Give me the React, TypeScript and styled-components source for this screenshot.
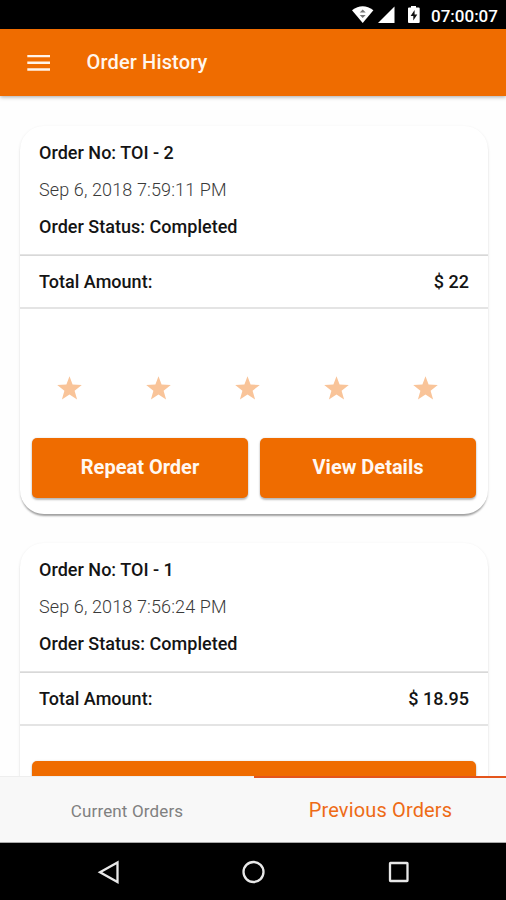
import React from "react";
import styled, { createGlobalStyle } from "styled-components";

const ORANGE = "#ef6c00";

const GlobalStyle = createGlobalStyle`
  *, *::before, *::after { box-sizing: border-box; }
  html, body { margin: 0; padding: 0; overflow: hidden; }
  body { font-family: Roboto, "Liberation Sans", sans-serif; background: #fefefe; }
`;

const Screen = styled.div`
  display: flex;
  flex-direction: column;
  width: 506px;
  height: 900px;
  overflow: hidden;
  background: #fefefe;
`;

const StatusBar = styled.div`
  display: flex;
  flex: none;
  align-items: center;
  justify-content: flex-end;
  height: 29px;
  padding: 2px 9px 0 0;
  background: #000;
  color: #fff;
`;

const StatusIcons = styled.svg`
  display: block;
  width: 80px;
  height: 27px;
`;

const Clock = styled.time`
  font-size: 17px;
  font-weight: 500;
  line-height: 27px;
  width: 66px;
  padding-top: 1px;
  white-space: nowrap;
`;

const Header = styled.header`
  display: flex;
  flex: none;
  align-items: center;
  z-index: 1;
  height: 67px;
  padding: 0 26px;
  background: ${ORANGE};
  box-shadow: 0 1px 4px rgba(0, 0, 0, 0.35);
`;

const MenuButton = styled.button`
  display: flex;
  width: 25px;
  margin: 0 35.5px 0 0;
  padding: 0 1px;
  border: 0;
  background: none;
`;

const MenuIcon = styled.svg`
  display: block;
  width: 23px;
  height: 19px;
  fill: #fff4ea;
`;

const Title = styled.h1`
  margin: 0 0 2px;
  color: #fff6ee;
  font-size: 20px;
  font-weight: 500;
  letter-spacing: 0.15px;
  line-height: 24px;
`;

const Orders = styled.main`
  display: flex;
  flex: 1;
  flex-direction: column;
  gap: 29px;
  min-height: 0;
  overflow: hidden;
  padding: 30px 18px 0 20px;
`;

const Card = styled.article`
  flex: none;
  height: 388px;
  border-radius: 24px;
  background: #fff;
  box-shadow: 0 3px 2px -1px rgba(0, 0, 0, 0.33), 0 1px 3px rgba(0, 0, 0, 0.1);
`;

const Summary = styled.div`
  height: 129px;
  padding: 8px 19px 0;
  border-bottom: 1px solid #e4e4e4;
`;

const Line = styled.p<{ $light?: boolean }>`
  margin: 0;
  color: ${(p) => (p.$light ? "#3a3a3a" : "#141414")};
  font-size: 18px;
  font-weight: ${(p) => (p.$light ? 300 : 500)};
  letter-spacing: ${(p) => (p.$light ? "0.12px" : "0.02px")};
  line-height: 37px;
  white-space: nowrap;
`;

const Total = styled.div`
  display: flex;
  align-items: center;
  justify-content: space-between;
  height: 54px;
  padding: 0 19px 1px;
  border-top: 1px solid #d8d8d8;
  border-bottom: 2px solid #e4e4e4;
`;

const Rating = styled.div`
  display: flex;
  justify-content: space-between;
  padding: 66px 49px 36px 36px;
`;

const Star = styled.svg`
  display: block;
  width: 27px;
  height: 27px;
  fill: #f9c499;
`;

const Actions = styled.div<{ $unrated?: boolean }>`
  display: flex;
  gap: 12px;
  padding: ${(p) => (p.$unrated ? "35px" : "0")} 12px 0;
`;

const Action = styled.button`
  flex: 1;
  height: 60px;
  padding: 0 0 2px;
  border: 0;
  border-radius: 5px;
  background: ${ORANGE};
  box-shadow: 0 2px 2px rgba(0, 0, 0, 0.25), 0 0 2px rgba(0, 0, 0, 0.15);
  color: #fff8f2;
  font: 700 20px Roboto, "Liberation Sans", sans-serif;
`;

const Tabs = styled.nav`
  display: flex;
  flex: none;
  z-index: 1;
  height: 67px;
  background: #f8f8f8;
  border-bottom: 1px solid #aaa;
`;

const Tab = styled.button<{ $active?: boolean }>`
  width: ${(p) => (p.$active ? "252px" : "254px")};
  padding: ${(p) => (p.$active ? "0 0 1px 1px" : "2px 0 0")};
  border: 0;
  border-top: ${(p) => (p.$active ? "2px solid #e4551c" : "1px solid #eee")};
  background: none;
  color: ${(p) => (p.$active ? "#ee6b16" : "#808080")};
  font: 400 ${(p) => (p.$active ? 20 : 17)}px Roboto, "Liberation Sans", sans-serif;
  letter-spacing: 0.15px;
`;

const SystemNav = styled.div`
  display: flex;
  flex: none;
  align-items: center;
  height: 57px;
  padding-left: 97px;
  gap: 121px;
  background: #000;
`;

const NavIcon = styled.svg`
  display: block;
  width: 24px;
  height: 24px;
  fill: none;
  stroke: #e8e8e8;
  stroke-width: 2.3;
`;

interface Order {
  no: string;
  date: string;
  total: string;
  rated: boolean;
}

const orders: Order[] = [
  { no: "TOI - 2", date: "Sep 6, 2018 7:59:11 PM", total: "$ 22", rated: true },
  { no: "TOI - 1", date: "Sep 6, 2018 7:56:24 PM", total: "$ 18.95", rated: false },
];

function OrderCard({ order }: { order: Order }) {
  return (
    <Card>
      <Summary>
        <Line>Order No: {order.no}</Line>
        <Line $light>{order.date}</Line>
        <Line>Order Status: Completed</Line>
      </Summary>
      <Total>
        <Line>Total Amount:</Line>
        <Line>{order.total}</Line>
      </Total>
      {order.rated && (
        <Rating>
          {[1, 2, 3, 4, 5].map((n) => (
            <Star key={n} viewBox="0 0 27 27">
              <path d="M13.5 1.2l3.1 8.4 9.2.4-7.2 5.7 2.5 8.9-7.6-5-7.6 5 2.5-8.9L1.2 10l9.2-.4z" />
            </Star>
          ))}
        </Rating>
      )}
      <Actions $unrated={!order.rated}>
        {order.rated && <Action>Repeat Order</Action>}
        <Action>{order.rated ? "View Details" : ""}</Action>
      </Actions>
    </Card>
  );
}

export default function App() {
  return (
    <Screen>
      <GlobalStyle />
      <StatusBar>
        <StatusIcons viewBox="351 2 80 27">
          <path d="M352 10.2q10.700-7.800 21.400 0L362.700 23z" fill="#fff" />
          <path d="M359.700 12.600l3-3.100 3 3.100zM359.700 15l3 3.100 3-3.100z" fill="#777" />
          <path d="M394.500 6.500V23H378z" fill="#fff" />
          <path d="M411 6h5v1.600h2.700q1 0 1 1V22q0 1-1 1H409q-1 0-1-1V8.600q0-1 1-1h2z" fill="#fff" />
          <path d="M414.600 10l-4 6h2.700v4.500l4-6h-2.700z" fill="#111" />
        </StatusIcons>
        <Clock>07:00:07</Clock>
      </StatusBar>
      <Header>
        <MenuButton aria-label="Menu">
          <MenuIcon viewBox="0 0 23 19">
            <path d="M.3 1.900H23v2.400H.3zM.3 8.600H23V11H.3zM.3 15.300H23v2.400H.3z" />
          </MenuIcon>
        </MenuButton>
        <Title>Order History</Title>
      </Header>
      <Orders>
        {orders.map((o) => (
          <OrderCard key={o.no} order={o} />
        ))}
      </Orders>
      <Tabs>
        <Tab>Current Orders</Tab>
        <Tab $active>Previous Orders</Tab>
      </Tabs>
      <SystemNav>
        <NavIcon viewBox="0 0 24 24">
          <path d="M20.500 2.500v19.500L3 12.200z" />
        </NavIcon>
        <NavIcon viewBox="0 0 24 24">
          <circle cx="11.500" cy="12" r="10" />
        </NavIcon>
        <NavIcon viewBox="0 0 24 24">
          <rect x="3" y="3" width="17.500" height="18" rx="0.500" />
        </NavIcon>
      </SystemNav>
    </Screen>
  );
}
